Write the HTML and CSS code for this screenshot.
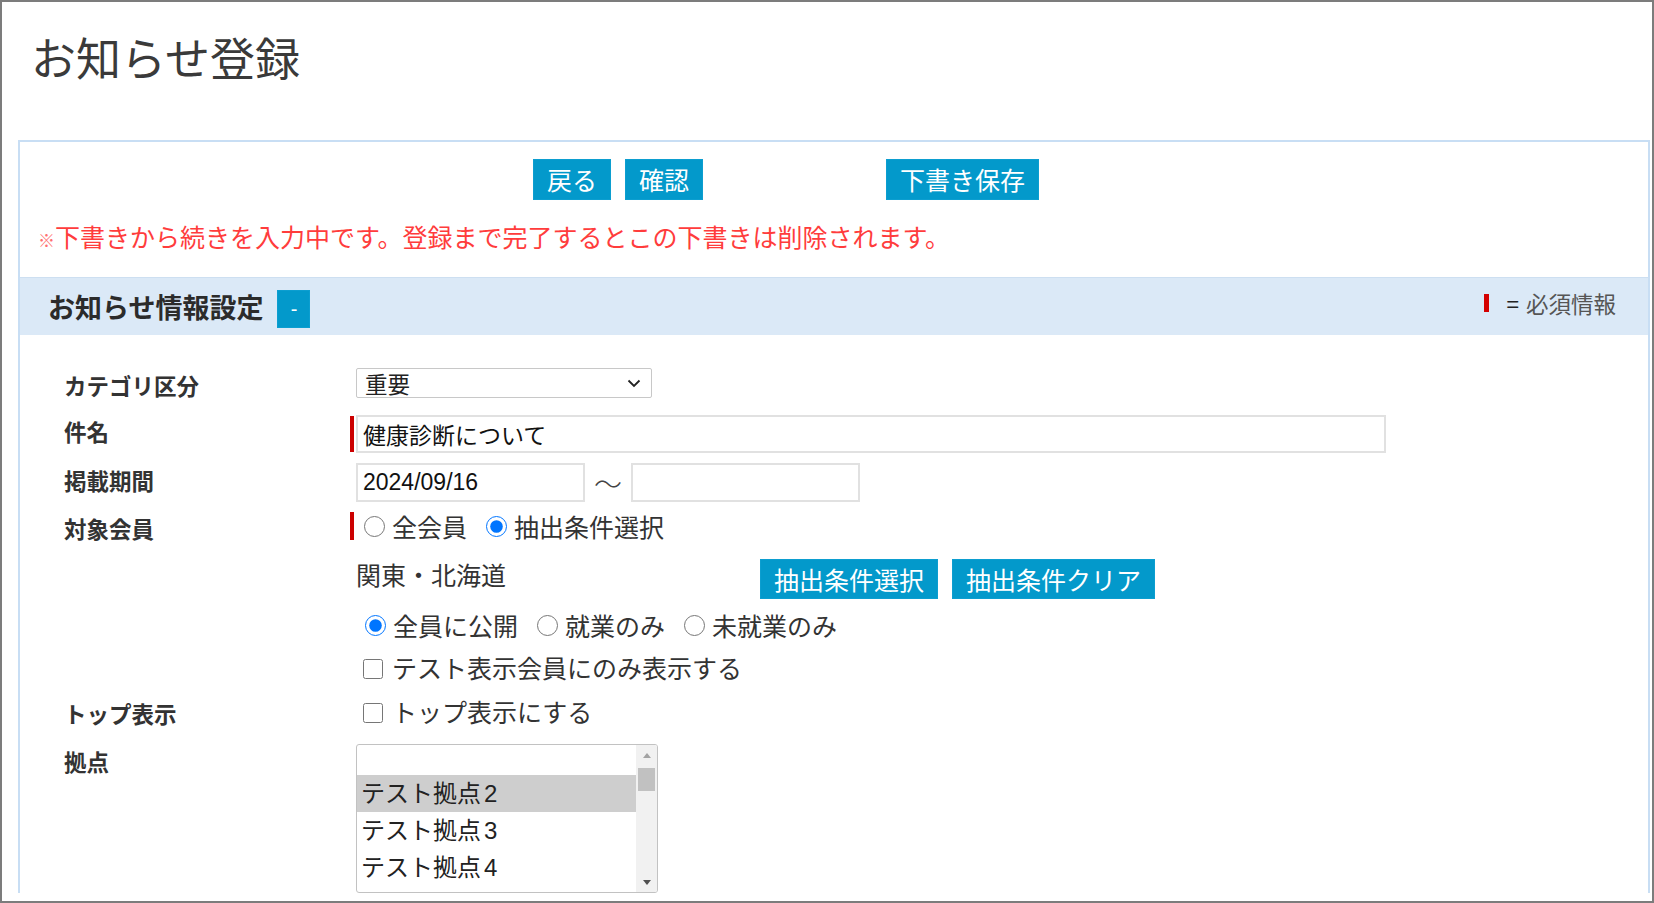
FILE: index.html
```html
<!DOCTYPE html>
<html lang="ja">
<head>
<meta charset="utf-8">
<title>お知らせ登録</title>
<link rel="stylesheet" href="styles.css">
</head>
<body>
<div class="frame">
  <h1 class="page-title">お知らせ登録</h1>

  <div class="panel">
    <div class="actions">
      <button class="btn" type="button">戻る</button>
      <button class="btn" type="button">確認</button>
      <button class="btn btn-draft" type="button">下書き保存</button>
    </div>

    <p class="notice"><span class="kome">※</span>下書きから続きを入力中です。登録まで完了するとこの下書きは削除されます。</p>

    <div class="section-head">
      <h2 class="section-title">お知らせ情報設定</h2>
      <button class="toggle" type="button">-</button>
      <div class="legend"><span class="req-mark"></span><span class="legend-eq">=</span>必須情報</div>
    </div>

    <div class="form">
      <div class="row row-category">
        <div class="label">カテゴリ区分</div>
        <div class="field">
          <div class="select">
            <span>重要</span>
            <svg class="chevron" width="14" height="9" viewBox="0 0 14 9"><path d="M1.5 1.5 L7 7 L12.5 1.5" fill="none" stroke="#222" stroke-width="1.8"/></svg>
          </div>
        </div>
      </div>

      <div class="row row-subject">
        <div class="label">件名</div>
        <div class="field field-req">
          <span class="req-bar"></span>
          <input class="text-input subject" type="text" value="健康診断について">
        </div>
      </div>

      <div class="row row-period">
        <div class="label">掲載期間</div>
        <div class="field">
          <input class="text-input date" type="text" value="2024/09/16">
          <span class="tilde">～</span>
          <input class="text-input date" type="text" value="">
        </div>
      </div>

      <div class="row row-target">
        <div class="label">対象会員</div>
        <div class="field field-req">
          <span class="req-bar short"></span>
          <label class="choice"><input type="radio" name="target">全会員</label>
          <label class="choice"><input type="radio" name="target" checked>抽出条件選択</label>
        </div>
      </div>

      <div class="row row-extract">
        <div class="label"></div>
        <div class="field">
          <span class="extract-text">関東・北海道</span>
          <button class="btn btn-sm" type="button">抽出条件選択</button>
          <button class="btn btn-sm" type="button">抽出条件クリア</button>
        </div>
      </div>

      <div class="row row-scope">
        <div class="label"></div>
        <div class="field field-indent">
          <label class="choice"><input type="radio" name="scope" checked>全員に公開</label>
          <label class="choice"><input type="radio" name="scope">就業のみ</label>
          <label class="choice"><input type="radio" name="scope">未就業のみ</label>
        </div>
      </div>

      <div class="row row-test">
        <div class="label"></div>
        <div class="field field-indent">
          <label class="choice"><input type="checkbox">テスト表示会員にのみ表示する</label>
        </div>
      </div>

      <div class="row row-top">
        <div class="label">トップ表示</div>
        <div class="field field-indent">
          <label class="choice"><input type="checkbox">トップ表示にする</label>
        </div>
      </div>

      <div class="row row-base">
        <div class="label">拠点</div>
        <div class="field">
          <div class="listbox">
            <div class="options">
              <div class="opt opt-blank"></div>
              <div class="opt selected">テスト拠点<span class="num">2</span></div>
              <div class="opt">テスト拠点<span class="num">3</span></div>
              <div class="opt">テスト拠点<span class="num">4</span></div>
              <div class="opt">テスト拠点<span class="num">5</span></div>
            </div>
            <div class="scrollbar">
              <span class="arrow">
                <svg width="8" height="5" viewBox="0 0 8 5"><path d="M0 5 L4 0 L8 5 Z" fill="#a3a3a3"/></svg>
              </span>
              <span class="thumb"></span>
              <span class="track"></span>
              <span class="arrow">
                <svg width="8" height="5" viewBox="0 0 8 5"><path d="M0 0 L4 5 L8 0 Z" fill="#505050"/></svg>
              </span>
            </div>
          </div>
        </div>
      </div>
    </div>
  </div>
</div>
</body>
</html>
```

FILE: styles.css
```css
html, body {
  margin: 0;
  padding: 0;
  background: #fff;
}

body {
  font-family: "Noto Sans CJK JP", "Noto Sans", sans-serif;
  color: #333;
}

.frame {
  width: 1654px;
  height: 903px;
  box-sizing: border-box;
  border: 2px solid #7c7c7c;
  overflow: hidden;
  background: #fff;
}

/* page heading */
.page-title {
  margin: 0;
  padding: 25px 0 0 29px;
  height: 60px;
  font-size: 45px;
  line-height: 60px;
  font-weight: 400;
  color: #3a3a3a;
}

/* main panel */
.panel {
  margin: 53px 2px 0 16px;
  border: 2px solid #c8def4;
  border-bottom: none;
}

.actions {
  display: flex;
  padding: 17px 0 0 513px;
}

.btn {
  height: 41px;
  padding: 0 13px;
  border: 1px solid #0c9ed0;
  background: #0399cb;
  color: #fff;
  font-family: "Noto Sans CJK JP", sans-serif;
  font-size: 25px;
  line-height: 37px;
  cursor: pointer;
}

.actions .btn + .btn {
  margin-left: 14px;
}

.actions .btn-draft {
  margin-left: 183px !important;
}

.notice {
  margin: 21px 0 0;
  padding-left: 18px;
  font-size: 25px;
  line-height: 30px;
  color: #ff3c3c;
}

.kome {
  font-size: 17px;
  color: #ff7070;
}

/* section header band */
.section-head {
  display: flex;
  align-items: center;
  height: 57px;
  margin-top: 22px;
  padding: 0 32px 0 28px;
  background: #dbe9f7;
  border-top: 1px solid #cddff1;
}

.section-title {
  margin: 0;
  font-size: 27px;
  font-weight: 700;
  color: #2b2b2b;
}

.toggle {
  width: 33px;
  height: 38px;
  margin: 5px 0 0 14px;
  padding: 0;
  border: 1px solid #0c9ed0;
  background: #0399cb;
  color: #fff;
  font-size: 20px;
  line-height: 34px;
}

.legend {
  display: flex;
  align-items: center;
  margin-left: auto;
  margin-bottom: 7px;
  font-size: 22.5px;
  color: #555;
}

.req-mark {
  width: 5px;
  height: 18px;
  margin-right: 17px;
  background: #d40000;
}

.legend-eq {
  color: #222;
  margin-right: 7px;
}

/* form rows */
.form {
  padding: 33px 0 0 44px;
}

.row {
  display: flex;
  align-items: center;
}

.label {
  width: 286px;
  flex: none;
  font-size: 22.5px;
  font-weight: 700;
  color: #333;
}

.field {
  display: flex;
  align-items: center;
  padding-left: 6px;
}

.field-req {
  padding-left: 0;
}

.field-indent {
  padding-left: 12px;
}

.req-bar {
  width: 4px;
  height: 36px;
  margin-right: 2px;
  background: #cc0000;
}

.req-bar.short {
  height: 28px;
  margin-right: 7px;
}

.row-category { height: 30px; }
.row-subject { height: 38px; margin-top: 17px; }
.row-period { height: 39px; margin-top: 10px; }
.row-target { height: 28px; margin-top: 10px; }
.row-extract { height: 40px; margin-top: 19px; }
.row-scope { height: 30px; margin-top: 11px; }
.row-test { height: 28px; margin-top: 13px; }
.row-top { height: 28px; margin-top: 16px; }
.row-base { align-items: flex-start; margin-top: 19px; }

.row-category .label { padding-top: 4px; }
.row-subject .label,
.row-period .label { padding-bottom: 6px; }
.row-target .label { padding-top: 3px; }
.row-top .label { padding-top: 4px; }
.row-base .label { line-height: 34px; }

/* pseudo select box */
.select {
  display: flex;
  align-items: center;
  justify-content: space-between;
  box-sizing: border-box;
  width: 296px;
  height: 30px;
  padding: 0 10px 0 8px;
  border: 1px solid #c8c8c8;
  border-radius: 2px;
  font-size: 22.5px;
  color: #222;
  background: #fff;
}

.text-input {
  box-sizing: border-box;
  margin: 0;
  padding: 0 5px;
  border: 2px solid #e1e1e1;
  font-family: "Liberation Sans", "Noto Sans CJK JP", sans-serif;
  font-size: 23px;
  color: #111;
  background: #fff;
  outline: none;
}

.subject {
  width: 1030px;
  height: 38px;
  font-family: "Noto Sans CJK JP", sans-serif;
}

.date {
  width: 229px;
  height: 39px;
}

.tilde {
  width: 46px;
  text-align: center;
  font-size: 28px;
  font-weight: 300;
  color: #444;
}

.choice {
  display: inline-flex;
  align-items: center;
  margin-right: 16px;
  font-size: 25px;
  color: #333;
  white-space: nowrap;
}

.choice input[type="radio"] {
  width: 21px;
  height: 21px;
  margin: 0 7px 0 3px;
}

.choice input[type="checkbox"] {
  width: 20px;
  height: 20px;
  margin: 3px 9px 0 1px;
}

.extract-text {
  width: 404px;
  flex: none;
  font-size: 25px;
  color: #333;
  margin-top: -10px;
}

.btn-sm {
  height: 40px;
  line-height: 36px;
}

.btn-sm + .btn-sm {
  margin-left: 14px;
}

/* multi-line list */
.listbox {
  display: flex;
  width: 302px;
  height: 149px;
  box-sizing: border-box;
  border: 1px solid #c2c2c2;
  border-radius: 3px;
  overflow: hidden;
  background: #fff;
}

.options {
  flex: 1;
  overflow: hidden;
}

.opt {
  height: 37px;
  line-height: 33px;
  padding-left: 4px;
  font-size: 24px;
  color: #222;
  white-space: nowrap;
}

.opt-blank {
  height: 30px;
}

.opt.selected {
  background: #cecece;
}

.num {
  font-family: "Liberation Sans", sans-serif;
  margin-left: 3px;
}

.scrollbar {
  display: flex;
  flex-direction: column;
  width: 21px;
  background: #f1f1f1;
}

.arrow {
  display: flex;
  align-items: center;
  justify-content: center;
  height: 20px;
}

.thumb {
  height: 23px;
  margin: 3px 2px 0;
  background: #c1c1c1;
}

.track {
  flex: 1;
}
```
